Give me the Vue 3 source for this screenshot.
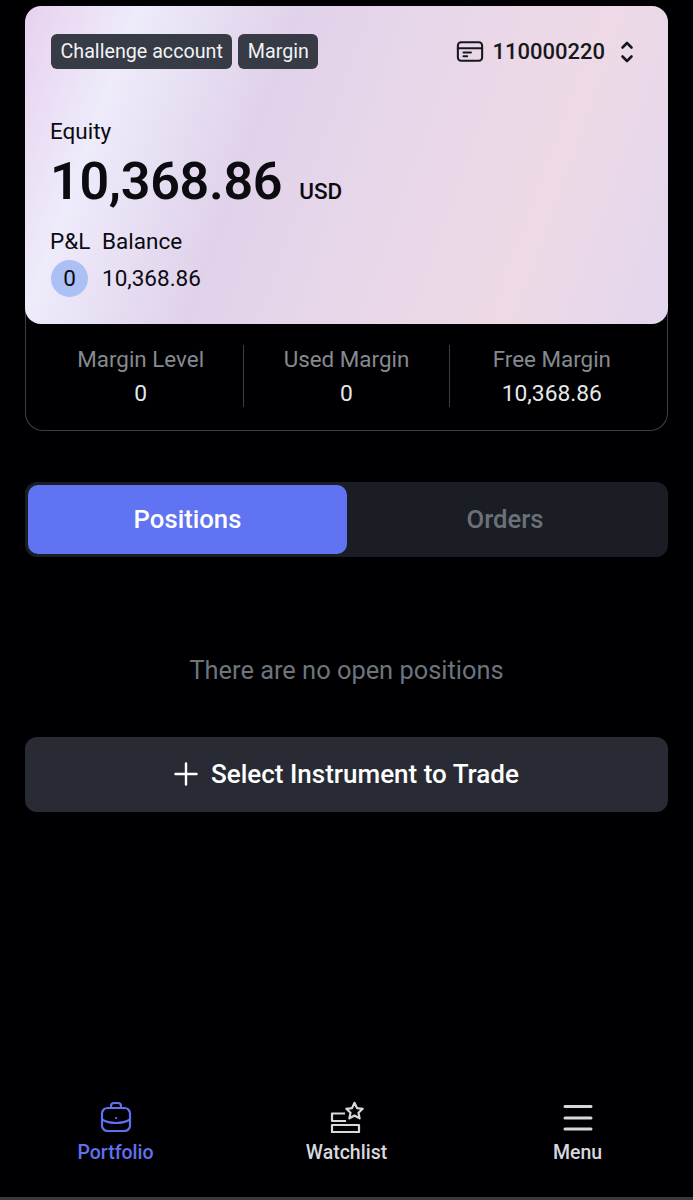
<script setup>
const stats = [
  { label: 'Margin Level', value: '0' },
  { label: 'Used Margin', value: '0' },
  { label: 'Free Margin', value: '10,368.86' }
]
</script>

<template>
  <div class="page">
    <main class="content">
      <section class="account">
        <div class="card">
          <div class="card-top">
            <div class="tags">
              <span class="tag">Challenge account</span>
              <span class="tag">Margin</span>
            </div>
            <div class="acc-id">
              <svg width="28" height="23" viewBox="0 0 30 24" fill="none" stroke="#17171c" stroke-width="2.2" stroke-linecap="round">
                <rect x="2" y="2" width="26" height="20" rx="3.5" />
                <path d="M2 8.5h26" />
                <path d="M8 13h8M8 17h4" />
              </svg>
              <span class="acc-num">110000220</span>
              <svg class="chevrons" width="14" height="24" viewBox="0 0 14 24" fill="none" stroke="#17171c" stroke-width="2.6" stroke-linecap="round" stroke-linejoin="round">
                <path d="M2.5 7.5 7 3l4.500 4.500" />
                <path d="M2.500 16.500 7 21l4.500-4.500" />
              </svg>
            </div>
          </div>
          <div class="equity-label">Equity</div>
          <div class="equity">
            <span class="equity-num">10,368.86</span>
            <span class="equity-cur">USD</span>
          </div>
          <div class="sub-grid">
            <span class="sub-label pl">P&amp;L</span>
            <span class="sub-label">Balance</span>
            <span class="pnl">0</span>
            <span class="balance">10,368.86</span>
          </div>
        </div>
        <div class="stats">
          <div v-for="s in stats" :key="s.label" class="stat">
            <div class="stat-label">{{ s.label }}</div>
            <div class="stat-value">{{ s.value }}</div>
          </div>
        </div>
      </section>

      <div class="tabs">
        <div class="tab active">Positions</div>
        <div class="tab">Orders</div>
      </div>

      <p class="empty">There are no open positions</p>

      <button class="trade-btn">
        <svg width="24" height="24" viewBox="0 0 24 24" fill="none" stroke="#fff" stroke-width="2.400" stroke-linecap="round">
          <path d="M12 1.500v21M1.500 12h21" />
        </svg>
        Select Instrument to Trade
      </button>
    </main>

    <nav class="nav">
      <div class="nav-item current">
        <svg width="32" height="32" viewBox="0 0 32 32" fill="none" stroke="#6070ee" stroke-width="2.200" stroke-linecap="round" stroke-linejoin="round">
          <path d="M11 7V5a3 3 0 0 1 3-3h4a3 3 0 0 1 3 3v2" />
          <rect x="2" y="7" width="28" height="23" rx="5.500" />
          <path d="M2 18.500c4 2.500 9 3.500 14 3.500s10-1 14-3.500" />
          <circle cx="16" cy="17" r="0.700" fill="#6070ee" stroke-width="1" />
        </svg>
        <span>Portfolio</span>
      </div>
      <div class="nav-item">
        <svg width="36" height="32" viewBox="0 0 36 32" fill="none" stroke="#d5d9de" stroke-width="2.200" stroke-linejoin="round">
          <path d="M16 12.500H3v7.500h14" />
          <rect x="3" y="24" width="27" height="7" />
          <path d="M25.500 1.800l2.500 5.300 5.700.7-4.200 3.900 1.100 5.700-5.100-2.900-5.100 2.900 1.100-5.700-4.200-3.900 5.700-.7z" />
        </svg>
        <span>Watchlist</span>
      </div>
      <div class="nav-item">
        <svg width="32" height="32" viewBox="0 0 32 32" fill="none" stroke="#d5d9de" stroke-width="3" stroke-linecap="round">
          <path d="M3 5.500h26M3 17h26M3 28h26" />
        </svg>
        <span>Menu</span>
      </div>
    </nav>
    <div class="home-line"></div>
  </div>
</template>

<style>
html, body {
  margin: 0;
  background: #000002;
}
</style>

<style scoped>
.page {
  height: 1200px;
  display: flex;
  flex-direction: column;
  background: #000002;
  font-family: Roboto, "Liberation Sans", sans-serif;
  overflow: hidden;
}

.content {
  padding: 6px 25px 0;
}

.account {
  border: 1px solid #3a3e46;
  border-top: none;
  border-radius: 18px;
}

.card {
  margin: 0 -1px;
  height: 318px;
  box-sizing: border-box;
  padding: 28px 26px 0;
  border-radius: 16px;
  color: #0b0b10;
  background: linear-gradient(110deg, #e8d1ee 0%, #eeebfb 15%, #e0d2ea 36%, #e6d6ea 50%, #eedae6 78%, #e3d6ee 100%);
}

.card-top {
  display: flex;
  justify-content: space-between;
  align-items: center;
  height: 35px;
}

.tags {
  display: flex;
  gap: 6px;
}

.tag {
  height: 35px;
  line-height: 35px;
  padding: 0 9.500px;
  border-radius: 6px;
  background: #363b45;
  color: #f2f3f5;
  font-size: 19.700px;
}

.acc-id {
  display: flex;
  align-items: center;
  margin-right: 8px;
}

.acc-num {
  margin-left: 8px;
  font-size: 22px;
  font-weight: 500;
  color: #17171c;
}

.chevrons {
  margin-left: 15px;
}

.equity-label {
  margin: 49px 0 0 -1px;
  font-size: 22.500px;
  line-height: 26px;
}

.equity {
  margin: 7px 0 0 -1px;
  line-height: 62px;
  display: flex;
  align-items: baseline;
}

.equity-num {
  font-size: 52px;
  font-weight: 600;
  letter-spacing: -0.300px;
}

.equity-cur {
  margin-left: 17px;
  font-size: 22.500px;
  font-weight: 500;
}

.sub-grid {
  margin-top: 6px;
  display: grid;
  grid-template-columns: 37px auto;
  justify-content: start;
  column-gap: 14px;
  row-gap: 5px;
  align-items: center;
  font-size: 22.500px;
}

.sub-label {
  line-height: 26px;
}

.sub-label.pl {
  margin-left: -1px;
  white-space: nowrap;
}

.pnl {
  width: 37px;
  height: 37px;
  line-height: 37px;
  text-align: center;
  border-radius: 50%;
  background: #acc0f5;
}

.balance {
  line-height: 38px;
}

.stats {
  display: grid;
  grid-template-columns: repeat(3, 1fr);
  padding: 21px 13px 23px 12px;
}

.stat {
  text-align: center;
  height: 62px;
  border-left: 1px solid #3a3e46;
}

.stat:first-child {
  border-left: none;
}

.stat-label {
  margin-top: 1px;
  font-size: 22.400px;
  line-height: 26px;
  color: #858a90;
}

.stat-value {
  margin-top: 9px;
  font-size: 22.800px;
  line-height: 26px;
  color: #e6e8ea;
}

.tabs {
  margin-top: 51px;
  display: flex;
  height: 75px;
  box-sizing: border-box;
  padding: 3px 5px 3px 3px;
  border-radius: 12px;
  background: #1a1d24;
}

.tab {
  flex: 1;
  display: flex;
  align-items: center;
  justify-content: center;
  padding-bottom: 2px;
  font-size: 25.700px;
  font-weight: 500;
  color: #6b7179;
  border-radius: 10px;
}

.tab.active {
  flex: 0 0 319px;
  background: #6073f3;
  color: #fff;
}

.empty {
  margin: 98px 0 0;
  text-align: center;
  font-size: 25.400px;
  line-height: 30px;
  color: #6d747c;
}

.trade-btn {
  margin-top: 52px;
  width: 100%;
  height: 75px;
  padding: 0 0 2px;
  display: flex;
  align-items: center;
  justify-content: center;
  gap: 13px;
  border: none;
  border-radius: 12px;
  background: #282b34;
  color: #fff;
  font-family: inherit;
  font-size: 26px;
  font-weight: 500;
}

.nav {
  margin-top: auto;
  display: grid;
  grid-template-columns: repeat(3, 1fr);
  padding-bottom: 32px;
}

.nav-item {
  display: flex;
  flex-direction: column;
  align-items: center;
  gap: 8px;
  color: #d5d9de;
  font-size: 19.500px;
  font-weight: 500;
  line-height: 24px;
}

.nav-item.current {
  color: #6070ee;
}

.home-line {
  height: 3px;
  background: #3a3a3d;
}
</style>
